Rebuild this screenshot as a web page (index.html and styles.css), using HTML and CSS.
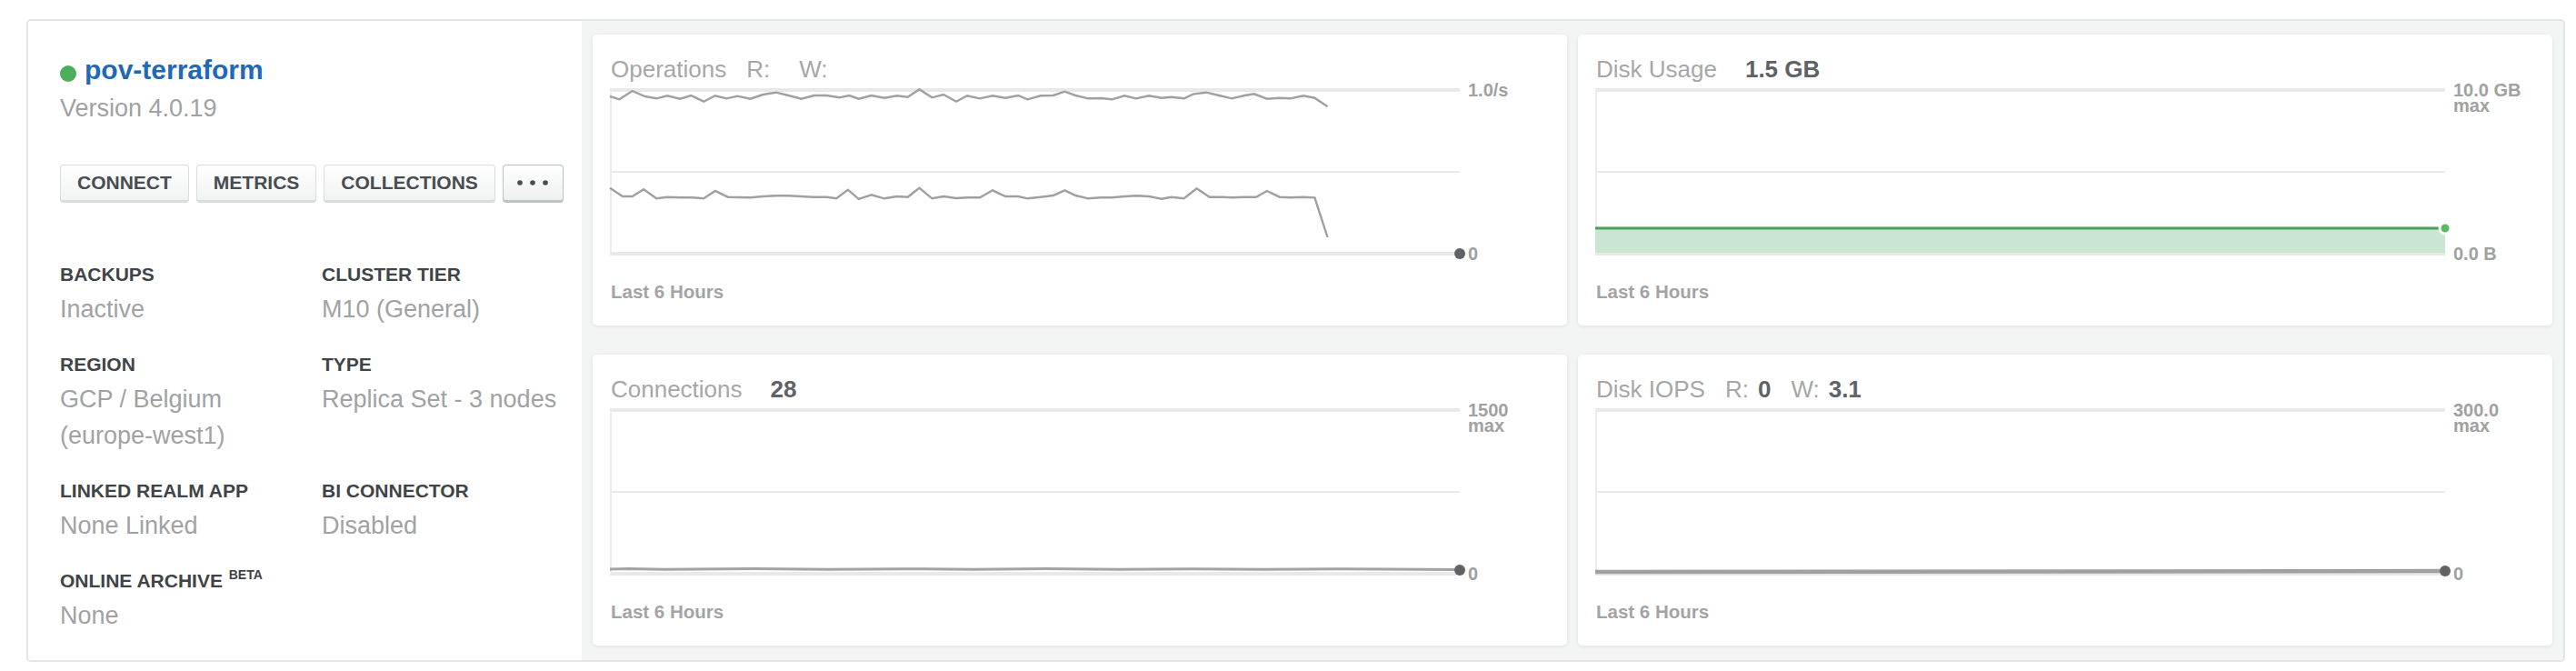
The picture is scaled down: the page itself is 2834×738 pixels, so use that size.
FILE: index.html
```html
<!DOCTYPE html>
<html lang="en">
<head>
<meta charset="utf-8">
<title>pov-terraform</title>
<link rel="stylesheet" href="styles.css">
</head>
<body>
<div class="cluster">
  <section class="summary">
    <div class="name-row"><span class="status-dot"></span><a class="name" href="#">pov-terraform</a></div>
    <div class="version">Version 4.0.19</div>
    <div class="actions">
      <button class="btn">CONNECT</button>
      <button class="btn">METRICS</button>
      <button class="btn">COLLECTIONS</button>
      <button class="btn btn-more" aria-label="More"><svg width="36" height="8" viewBox="0 0 36 8"><circle cx="4" cy="4" r="2.8"/><circle cx="18" cy="4" r="2.8"/><circle cx="32" cy="4" r="2.8"/></svg></button>
    </div>
    <div class="info">
      <div class="field"><div class="label">BACKUPS</div><div class="value">Inactive</div></div>
      <div class="field"><div class="label">CLUSTER TIER</div><div class="value">M10 (General)</div></div>
      <div class="field"><div class="label">REGION</div><div class="value">GCP / Belgium<br>(europe-west1)</div></div>
      <div class="field"><div class="label">TYPE</div><div class="value">Replica Set - 3 nodes</div></div>
      <div class="field"><div class="label">LINKED REALM APP</div><div class="value">None Linked</div></div>
      <div class="field"><div class="label">BI CONNECTOR</div><div class="value">Disabled</div></div>
      <div class="field"><div class="label">ONLINE ARCHIVE <sup class="beta">BETA</sup></div><div class="value">None</div></div>
    </div>
  </section>

  <section class="metrics">
    <div class="card">
      <div class="card-title"><span class="name-t">Operations</span><span class="stat"><span>R:</span><b></b></span><span class="stat"><span>W:</span><b></b></span></div>
      <div class="chart">
        <svg class="plot" width="935" height="184" viewBox="0 0 935 184">
          <line class="grid-thick" x1="0" y1="2" x2="935" y2="2"/>
          <line class="grid-thin" x1="0" y1="92" x2="935" y2="92"/>
          <line class="grid-thick" x1="0" y1="182" x2="935" y2="182"/>
          <line class="axis" x1="1" y1="2" x2="1" y2="182"/>
          <polyline class="series" points="0,9 10.5,12.3 24.6,3 38.6,9 51.2,11.3 63.2,8.3 77.2,11.7 89.1,8 103.2,14.7 115.8,8.3 128.4,11.3 140.4,8.7 154.4,11.7 168.4,7 182.5,4.7 196.5,8 210.5,11.7 224.6,8 238.6,8 252.6,10.3 263.2,8 273.7,11.7 287.7,8 301.8,10.7 315.8,8.3 327.7,9.7 340.4,1.3 354.4,10.3 367,7 381.1,14.7 393,8.3 407,11.3 421.1,8.3 435.1,10.7 449.1,8 459.6,12.3 473.7,8.3 487.7,8 500.4,3.7 512.3,8 526.3,11.3 540.4,11 552.3,12.3 566.3,8.3 578.9,11.3 593,8.3 607,10.7 617.5,9.7 631.6,11.3 642.1,6.3 656.1,4.7 670.2,8 684.2,11.3 698.2,8 708.8,6.3 722.8,11.7 736.8,10.7 748.8,11.3 762.8,8.3 775.4,10.7 789.5,20.3"/>
          <polyline class="series" points="0,109.7 14,119 24.6,119 37.2,111.3 51.2,121.3 63.2,119.7 77.2,120.3 91.2,120.3 103.2,121.3 115.8,113 129.8,119.7 154.4,120.3 168.4,119 182.5,118.3 196.5,118.3 210.5,119 224.6,119.7 238.6,119.7 249.1,121.3 261.8,111.7 273.7,122 287.7,117.3 301.8,121.3 315.8,119 327.7,119.7 340.4,109.7 354.4,121.3 367,119 381.1,121 393,120.3 407,120.3 421.1,112.3 435.1,119 449.1,119 459.6,121.3 473.7,119.7 487.7,118 500.4,112.3 512.3,118 526.3,121.3 540.4,120.3 552.3,120.3 566.3,119 578.9,118.3 593,119 607,121.7 617.5,119.7 631.6,121.3 645.6,110.3 659.6,119.7 673.7,119.7 684.2,120.3 698.2,119.7 710.9,119.7 722.8,113 736.8,119.7 748.8,120.3 762.8,119.7 775.4,120.3 789.5,164"/>
          <circle class="end-dot" cx="935" cy="182" r="6"/>
        </svg>
        <div class="y-axis"><div class="y-top">1.0/s</div><div class="y-bottom">0</div></div>
      </div>
      <div class="card-foot">Last 6 Hours</div>
    </div>

    <div class="card">
      <div class="card-title"><span class="name-t">Disk Usage</span><b class="big">1.5 GB</b></div>
      <div class="chart">
        <svg class="plot" width="935" height="184" viewBox="0 0 935 184">
          <line class="grid-thick" x1="0" y1="2" x2="935" y2="2"/>
          <line class="grid-thin" x1="0" y1="92" x2="935" y2="92"/>
          <line class="grid-thick" x1="0" y1="182" x2="935" y2="182"/>
          <line class="axis" x1="1" y1="2" x2="1" y2="182"/>
          <rect class="area" x="0" y="154" width="935" height="27"/>
          <line class="area-line" x1="0" y1="154" x2="935" y2="154"/>
          <circle class="green-dot" cx="935" cy="154" r="6"/>
        </svg>
        <div class="y-axis"><div class="y-top">10.0 GB<br>max</div><div class="y-bottom">0.0 B</div></div>
      </div>
      <div class="card-foot">Last 6 Hours</div>
    </div>

    <div class="card">
      <div class="card-title"><span class="name-t">Connections</span><b class="big">28</b></div>
      <div class="chart">
        <svg class="plot" width="935" height="184" viewBox="0 0 935 184">
          <line class="grid-thick" x1="0" y1="2" x2="935" y2="2"/>
          <line class="grid-thin" x1="0" y1="92" x2="935" y2="92"/>
          <line class="grid-thick" x1="0" y1="182" x2="935" y2="182"/>
          <line class="axis" x1="1" y1="2" x2="1" y2="182"/>
          <polyline class="flat" points="0,177 20,176.6 60,177.2 160,176.6 240,177.2 320,176.7 400,177.2 480,176.6 560,177.2 640,176.8 720,177.2 800,176.7 935,177.6"/>
          <circle class="end-dot" cx="935" cy="178" r="6"/>
        </svg>
        <div class="y-axis"><div class="y-top">1500<br>max</div><div class="y-bottom">0</div></div>
      </div>
      <div class="card-foot">Last 6 Hours</div>
    </div>

    <div class="card">
      <div class="card-title"><span class="name-t">Disk IOPS</span><span class="stat"><span>R:</span><b>0</b></span><span class="stat"><span>W:</span><b>3.1</b></span></div>
      <div class="chart">
        <svg class="plot" width="935" height="184" viewBox="0 0 935 184">
          <line class="grid-thick" x1="0" y1="2" x2="935" y2="2"/>
          <line class="grid-thin" x1="0" y1="92" x2="935" y2="92"/>
          <line class="grid-thick" x1="0" y1="182" x2="935" y2="182"/>
          <line class="axis" x1="1" y1="2" x2="1" y2="182"/>
          <polyline class="iops" points="0,180 935,179"/>
          <circle class="end-dot" cx="935" cy="179" r="6"/>
        </svg>
        <div class="y-axis"><div class="y-top">300.0<br>max</div><div class="y-bottom">0</div></div>
      </div>
      <div class="card-foot">Last 6 Hours</div>
    </div>
  </section>
</div>
</body>
</html>
```

FILE: styles.css
```css
html, body {
  margin: 0;
  padding: 0;
  background: #ffffff;
}

body {
  font-family: "Liberation Sans", Arial, Helvetica, sans-serif;
}

.cluster {
  display: flex;
  box-sizing: border-box;
  width: 2793px;
  height: 707px;
  margin: 21px 0 0 29px;
  border: 2px solid #e2e5e5;
  border-radius: 5px;
  overflow: hidden;
}

/* ---------- left summary ---------- */
.summary {
  box-sizing: border-box;
  width: 609px;
  flex: none;
  background: #ffffff;
  padding: 37px 0 0 35px;
}

.name-row {
  display: flex;
  align-items: center;
  height: 34px;
}

.status-dot {
  width: 18px;
  height: 18px;
  border-radius: 50%;
  background: #4cad5b;
  margin: 8px 9px 0 0;
  flex: none;
}

.name {
  font-size: 30px;
  line-height: 34px;
  font-weight: bold;
  color: #2168b8;
  text-decoration: none;
}

.version {
  margin-top: 9px;
  font-size: 27px;
  line-height: 32px;
  color: #a0a2a3;
}

.actions {
  display: flex;
  gap: 8px;
  margin-top: 46px;
}

.btn {
  box-sizing: border-box;
  height: 42px;
  padding: 0 18px;
  margin: 0;
  border: 1px solid #d9dcdc;
  border-bottom-width: 3px;
  border-radius: 4px;
  background: linear-gradient(#ffffff, #f1f2f2);
  font-family: "Liberation Sans", Arial, Helvetica, sans-serif;
  font-size: 21px;
  font-weight: bold;
  color: #474d50;
  display: flex;
  align-items: center;
  cursor: pointer;
}

.btn-more {
  width: 67px;
  justify-content: center;
  padding: 0;
  border-color: #b9c3c3;
  background: linear-gradient(#ffffff, #eef0f0);
}

.btn-more svg {
  fill: #474d50;
  display: block;
}

.info {
  display: grid;
  grid-template-columns: 288px 1fr;
  row-gap: 27px;
  margin-top: 65px;
}

.label {
  font-size: 21px;
  line-height: 28px;
  font-weight: bold;
  color: #3f4448;
  white-space: nowrap;
}

.beta {
  font-size: 14px;
  vertical-align: 9px;
  line-height: 0;
  margin-left: 1px;
}

.value {
  margin-top: 4px;
  font-size: 27px;
  line-height: 40px;
  color: #a0a2a3;
}

/* ---------- right metrics ---------- */
.metrics {
  flex: 1;
  background: #f3f4f4;
  display: grid;
  grid-template-columns: 1072px 1072px;
  grid-template-rows: 320px 320px;
  column-gap: 12px;
  row-gap: 32px;
  padding: 15px 12px 16px;
}

.card {
  background: #ffffff;
  border-radius: 5px;
  box-shadow: 0 1px 4px rgba(0, 0, 0, 0.09);
  padding: 23px 20px 0 19px;
}

.card-title {
  display: flex;
  align-items: baseline;
  height: 30px;
  margin-left: 1px;
  font-size: 26px;
  line-height: 30px;
  color: #a6a7a7;
  white-space: nowrap;
}

.card-title b {
  font-weight: bold;
  color: #5f6366;
}

.stat {
  display: flex;
  align-items: baseline;
  margin-left: 22px;
}

.stat b {
  margin-left: 10px;
}

.big {
  margin-left: 31px;
}

.chart {
  display: flex;
  margin-top: 6px;
}

.plot {
  display: block;
  overflow: visible;
  flex: none;
}

.grid-thick {
  stroke: #e8eaea;
  stroke-width: 4;
}

.grid-thin {
  stroke: #e9ebeb;
  stroke-width: 2;
}

.axis {
  stroke: #ebeded;
  stroke-width: 2;
}

.series {
  fill: none;
  stroke: #a0a0a0;
  stroke-width: 2.4;
  stroke-linejoin: miter;
}

.flat {
  fill: none;
  stroke: #a3a3a3;
  stroke-width: 3;
}

.iops {
  fill: none;
  stroke: #a0a0a0;
  stroke-width: 4.5;
}

.end-dot {
  fill: #5f6366;
}

.area {
  fill: #c9e6d0;
}

.area-line {
  stroke: #47a159;
  stroke-width: 3;
}

.green-dot {
  fill: #5bb867;
  stroke: #ffffff;
  stroke-width: 3;
}

.y-axis {
  display: flex;
  flex-direction: column;
  justify-content: space-between;
  height: 184px;
  margin-left: 9px;
  font-size: 20px;
  line-height: 17px;
  font-weight: bold;
  color: #a0a1a1;
  white-space: nowrap;
}

.y-top {
  margin-top: -6px;
}

.y-bottom {
  margin-bottom: -7px;
}

.card-foot {
  margin-top: 28px;
  margin-left: 1px;
  font-size: 20.5px;
  line-height: 24px;
  font-weight: bold;
  color: #a3a4a4;
}
```
